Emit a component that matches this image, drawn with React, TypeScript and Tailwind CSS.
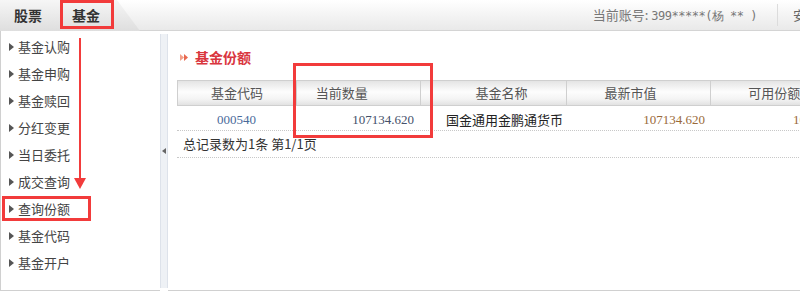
import React from "react";

const menu = ["基金认购", "基金申购", "基金赎回", "分红变更", "当日委托", "成交查询", "查询份额", "基金代码", "基金开户"];

function Tri() {
  return (
    <svg width="5" height="8" viewBox="0 0 5 8" className="mr-[4px] shrink-0">
      <path d="M0 0 L5 4 L0 8 Z" fill="#555" />
    </svg>
  );
}

export default function App() {
  const serif = { fontFamily: '"Liberation Serif", "Times New Roman", serif' };
  return (
    <div
      className="relative w-[800px] h-[292px] overflow-hidden bg-white text-[13px] text-[#333]"
      style={{ fontFamily: '"Noto Sans CJK SC", "Noto Sans", sans-serif' }}
    >
      {/* top bar */}
      <div className="relative h-[31px] border-b border-[#d4d4d4] bg-[linear-gradient(to_bottom,#ffffff,#e9e9e9)] flex items-center">
        <div className="absolute left-0 top-0 h-[31px] w-[140px] bg-[linear-gradient(to_bottom,#f6f6f6,#dedede)] [clip-path:polygon(0_0,117px_0,140px_31px,0_31px)]" />
        <div className="relative flex items-center h-full shrink-0">
          <span className="ml-[14px] font-bold text-[14px] text-[#333] leading-none">股票</span>
          <span className="ml-[30px] font-bold text-[14px] text-[#333] leading-none">基金</span>
        </div>
        <div className="ml-auto mr-[-45px] flex items-center h-full shrink-0">
          <span className="text-[13px] text-[#777] mr-[20px]">当前账号: <span className="text-[12px]" style={{ fontFamily: '"DejaVu Sans Mono", monospace', letterSpacing: '-0.5px' }}>399*****(杨 ** )</span></span>
          <div className="w-px h-[22px] bg-[#dcdcdc]" />
          <span className="ml-[15px] text-[#666]">安全退出</span>
        </div>
      </div>

      {/* body */}
      <div className="flex h-[261px]">
        <div className="w-[160px] shrink-0 border-l border-[#d0d0d0] border-b pt-[2px] h-[260px]">
          {menu.map((m) => (
            <div key={m} className="h-[27px] flex items-center pl-[8px] text-[13px] text-[#444]">
              <Tri />
              <span>{m}</span>
            </div>
          ))}
        </div>
        <div className="w-[8px] shrink-0 mt-[3px] h-[254px] bg-[#eef1f5] border-x border-[#dde2ea] relative">
          <div className="absolute left-0 top-[106px] w-[6px] h-[22px] flex items-center justify-center">
            <svg width="4" height="6" viewBox="0 0 4 6"><path d="M4 0 L0 3 L4 6 Z" fill="#666" /></svg>
          </div>
        </div>
        <div className="flex-1 min-w-0 overflow-hidden border-b border-[#d0d0d0] h-[260px] pl-[9px] pt-[18px]">
          <div className="flex items-center h-[16px] ml-[3px]">
            <svg width="9" height="9" viewBox="0 0 9 9">
              <path d="M0 1 L4 4.5 L0 8 Z" fill="#f3a08a" />
              <path d="M4 1 L8 4.5 L4 8 Z" fill="#e8684f" />
            </svg>
            <span className="ml-[6px] font-bold text-[14px] text-[#d9363e]">基金份额</span>
          </div>
          <div className="mt-[15px] w-[660px]">
            <div className="flex h-[26px] border-y border-l border-[#cfcfcf] bg-[linear-gradient(to_bottom,#e4e4e4,#fdfdfd_45%,#f4f4f4_75%,#e2e2e2)] text-[#555]">
              <div className="w-[119px] border-r border-[#cfcfcf] flex items-center justify-center">基金代码</div>
              <div className="w-[124px] border-r border-[#cfcfcf] flex items-center pl-[19px]">当前数量</div>
              <div className="w-[147px] border-r border-[#cfcfcf] flex items-center pl-[55px]">基金名称</div>
              <div className="w-[144px] border-r border-[#cfcfcf] flex items-center pl-[37px]">最新市值</div>
              <div className="w-[126px] flex items-center pl-[37px] whitespace-nowrap">可用份额</div>
            </div>
            <div className="flex h-[25px] border-b border-dotted border-[#c8c8c8] items-center pt-[3px]">
              <div className="w-[119px] text-center text-[#4a6a9a]" style={serif}>000540</div>
              <div className="w-[124px] text-right pr-[6px] text-[#44506a]" style={serif}>107134.620</div>
              <div className="w-[147px] pl-[26px] text-[#222] whitespace-nowrap">国金通用金鹏通货币</div>
              <div className="w-[144px] text-right pr-[6px] text-[#9a6a3a]" style={serif}>107134.620</div>
              <div className="w-[126px] pl-[82px] text-[#9a6a3a] whitespace-nowrap" style={serif}>107134.620</div>
            </div>
            <div className="h-[27px] flex items-center border-b border-dotted border-[#c8c8c8] pl-[6px] text-[#333]">
              总记录数为1条 第1/1页
            </div>
          </div>
        </div>
      </div>

      {/* red annotations */}
      <div className="absolute left-[60px] top-0 w-[54px] h-[29px] border-[3px] border-[#f23b3b]" />
      <div className="absolute left-[79px] top-[38px] w-[2px] h-[142px] bg-[#f23b3b]" />
      <svg className="absolute left-[74px] top-[178px]" width="12" height="11" viewBox="0 0 12 11">
        <path d="M0 0 L12 0 L6 11 Z" fill="#f23b3b" />
      </svg>
      <div className="absolute left-[2px] top-[196px] w-[89px] h-[25px] border-[3px] border-[#f23b3b]" />
      <div className="absolute left-[293px] top-[63px] w-[140px] h-[75px] border-[3px] border-[#f23b3b]" />
    </div>
  );
}
